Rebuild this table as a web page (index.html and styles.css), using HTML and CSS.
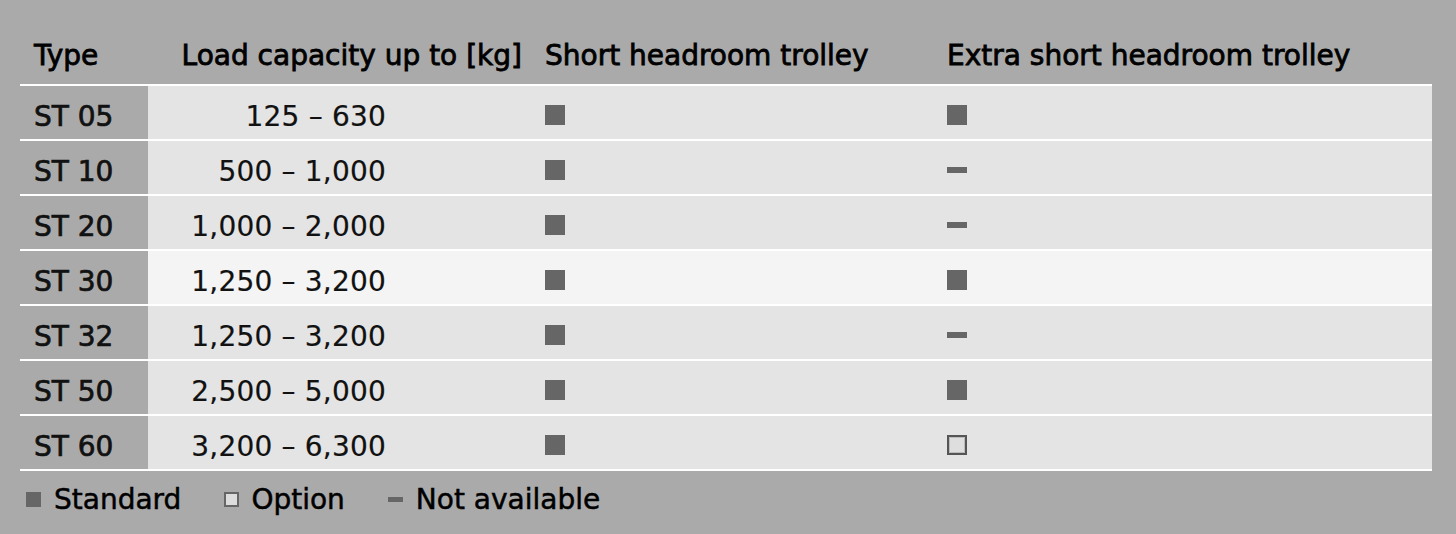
FILE: index.html
```html
<!DOCTYPE html>
<html>
<head>
<meta charset="utf-8">
<link rel="stylesheet" href="styles.css">
</head>
<body>
<div class="wrap">
  <table class="spec">
    <thead>
      <tr>
        <th class="c-type">Type</th>
        <th class="c-load">Load capacity up to [kg]</th>
        <th class="c-short">Short headroom trolley</th>
        <th class="c-extra">Extra short headroom trolley</th>
      </tr>
    </thead>
    <tbody>
      <tr><td class="c-type">ST 05</td><td class="c-load">125 – 630</td><td class="c-short"><span class="mk std"></span></td><td class="c-extra"><span class="mk std"></span></td></tr>
      <tr><td class="c-type">ST 10</td><td class="c-load">500 – 1,000</td><td class="c-short"><span class="mk std"></span></td><td class="c-extra"><span class="mk na"></span></td></tr>
      <tr><td class="c-type">ST 20</td><td class="c-load">1,000 – 2,000</td><td class="c-short"><span class="mk std"></span></td><td class="c-extra"><span class="mk na"></span></td></tr>
      <tr class="hl"><td class="c-type">ST 30</td><td class="c-load">1,250 – 3,200</td><td class="c-short"><span class="mk std"></span></td><td class="c-extra"><span class="mk std"></span></td></tr>
      <tr><td class="c-type">ST 32</td><td class="c-load">1,250 – 3,200</td><td class="c-short"><span class="mk std"></span></td><td class="c-extra"><span class="mk na"></span></td></tr>
      <tr><td class="c-type">ST 50</td><td class="c-load">2,500 – 5,000</td><td class="c-short"><span class="mk std"></span></td><td class="c-extra"><span class="mk std"></span></td></tr>
      <tr><td class="c-type">ST 60</td><td class="c-load">3,200 – 6,300</td><td class="c-short"><span class="mk std"></span></td><td class="c-extra"><span class="mk opt"></span></td></tr>
    </tbody>
  </table>
  <div class="legend">
    <span class="lg"><span class="lmk std"></span>Standard</span>
    <span class="lg"><span class="lmk opt"></span>Option</span>
    <span class="lg"><span class="lmk na"></span>Not available</span>
  </div>
</div>
</body>
</html>
```

FILE: styles.css
```css
html, body {
  margin: 0;
  padding: 0;
  background: #aaaaaa;
}
body {
  width: 1456px;
  height: 534px;
  overflow: hidden;
  font-family: "DejaVu Sans", "Liberation Sans", sans-serif;
  color: #111;
}
.wrap {
  padding: 26px 24px 0 20px;
}
.spec {
  width: 1412px;
  border-collapse: collapse;
  table-layout: fixed;
}
.spec th, .spec td {
  padding: 0 0 0 14px;
  text-align: left;
  white-space: nowrap;
}
.spec th {
  height: 58px;
  font-size: 28px;
  font-weight: normal;
  color: #000;
  -webkit-text-stroke: 0.8px #000;
  vertical-align: middle;
  border-bottom: 2px solid #fff;
}
.spec td {
  height: 46px;
  padding-top: 7px;
  font-size: 28px;
  letter-spacing: 0.2px;
  background: #e4e4e4;
  border-bottom: 2px solid #fff;
  vertical-align: middle;
  -webkit-text-stroke: 0.2px #111;
}
.spec tr.hl td { background: #f4f4f4; }
.spec tr td.c-type {
  background: #aaaaaa;
  color: #111;
  letter-spacing: 0;
  -webkit-text-stroke: 0.7px #111;
}
.c-type { width: 114px; }
.c-load { width: 360px; }
.c-short { width: 388px; }
.spec th.c-load { text-align: right; padding-right: 9px; }
.spec td.c-load { text-align: right; padding-right: 145px; }
.spec td.c-load { width: 224px; }

.mk {
  display: inline-block;
  width: 20px;
  height: 20px;
  background: #666;
  vertical-align: 1px;
  box-sizing: border-box;
}
.mk.na { height: 6px; vertical-align: 8px; }
.mk.opt {
  background: #dedede;
  border: 2px solid #555;
  box-shadow: inset 0 0 0 1px #bbb;
}
.legend {
  display: flex;
  align-items: center;
  height: 56px;
  padding-left: 6px;
  font-size: 28px;
  color: #000;
  -webkit-text-stroke: 0.5px #000;
}
.lg {
  display: inline-flex;
  align-items: center;
  margin-right: 43px;
}
.lmk {
  display: inline-block;
  width: 15px;
  height: 15px;
  background: #666;
  margin-right: 13px;
  box-sizing: border-box;
}
.lmk.opt {
  background: #ddd;
  border: 2px solid #666;
  margin-right: 12px;
}
.lmk.na { height: 5px; }
```
